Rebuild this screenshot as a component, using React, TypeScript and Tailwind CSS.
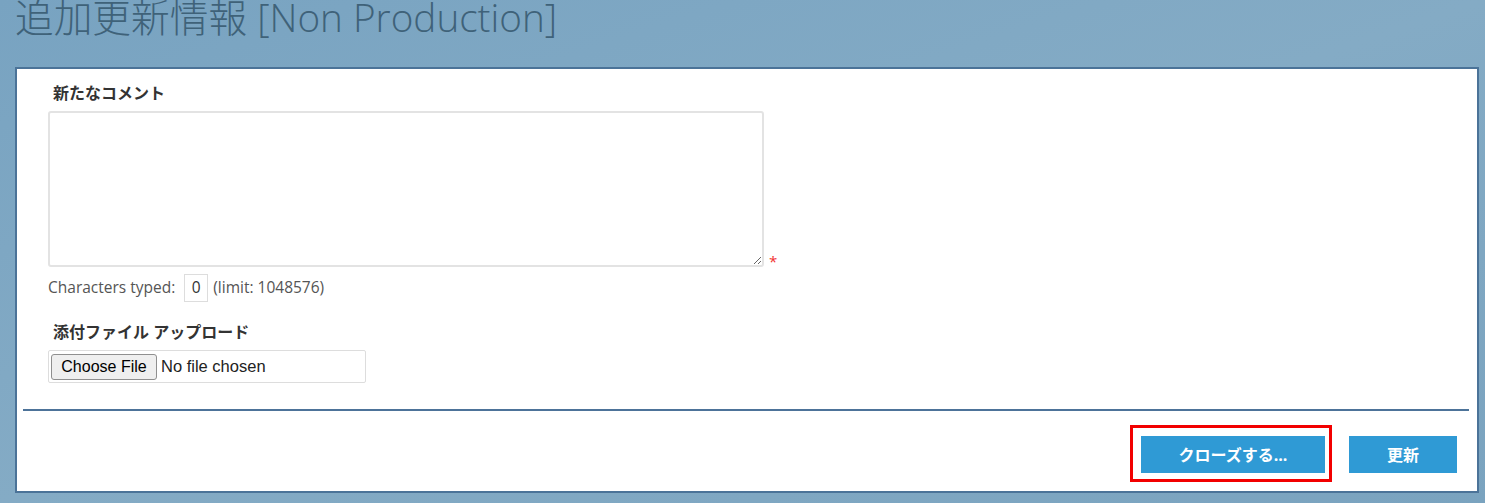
const FONT = "font-['Open_Sans','Noto_Sans_CJK_JP',sans-serif]"

const FieldLabel = ({ children }: { children: string }) => (
    <div className="pl-[5px] text-[16px] font-bold leading-[22px] text-[#333]">{children}</div>
)

const FakeFileInput = () => (
    <div className="flex h-[33px] w-[318px] items-center border border-[#ddd] rounded-[2px] bg-white pl-[2px] font-['Liberation_Sans',Arial,sans-serif]">
        <span className="flex h-[26px] w-[106px] items-center justify-center rounded-[3px] border border-[#8f8f8f] bg-[#efefef] text-[16px] text-black">
            Choose File
        </span>
        <span className="ml-[4px] text-[16.5px] text-[#222]">No file chosen</span>
    </div>
)

export default function App() {
    return (
        <div
            className={`${FONT} h-[503px] w-[1485px] overflow-hidden bg-gradient-to-br from-[#78a3c1] via-[#84abc5] to-[#7aa3bf]`}
        >
            <h1 className="h-[35px] pl-[15px] text-[38.7px] font-light leading-[35px] text-[#3f6279] whitespace-nowrap">
                追加更新情報 [Non Production]
            </h1>

            <div className="ml-[15px] mt-[32px] flex h-[426px] w-[1464px] flex-col border-2 border-[#4b7398] bg-white">
                <div className="px-[31px] pt-[13px]">
                    <FieldLabel>新たなコメント</FieldLabel>
                    <div className="mt-[7px] flex items-end">
                        <textarea className="h-[156px] w-[716px] rounded-[3px] border-2 border-[#e3e3e3] bg-white outline-none" />
                        <span className="mb-[-2px] ml-[5px] text-[15px] leading-none text-[#f23030]">*</span>
                    </div>
                    <div className="mt-[7px] flex items-center text-[15.5px] text-[#555]">
                        <span>Characters typed:</span>
                        <span className="ml-[9px] flex h-[28px] w-[24px] items-center justify-center border border-[#ddd] text-[#333]">
                            0
                        </span>
                        <span className="ml-[5px]">(limit: 1048576)</span>
                    </div>
                    <div className="mt-[19px]">
                        <FieldLabel>添付ファイル アップロード</FieldLabel>
                    </div>
                    <div className="mt-[7px]">
                        <FakeFileInput />
                    </div>
                </div>

                <div className="ml-[6px] mr-[8px] mt-[26px] h-[2px] bg-[#4d7399]" />

                <div className="flex justify-end gap-[24px] pr-[20px] pt-[25px]">
                    <div className="relative">
                        <button className="h-[37px] w-[184px] bg-[#2f9ad5] text-[16px] font-bold text-white">
                            クローズする...
                        </button>
                        <div className="pointer-events-none absolute -left-[11px] -top-[11px] h-[57px] w-[202px] border-[3px] border-[#f20000]" />
                    </div>
                    <button className="h-[37px] w-[108px] bg-[#2f9ad5] text-[16px] font-bold text-white">
                        更新
                    </button>
                </div>
            </div>
        </div>
    )
}
